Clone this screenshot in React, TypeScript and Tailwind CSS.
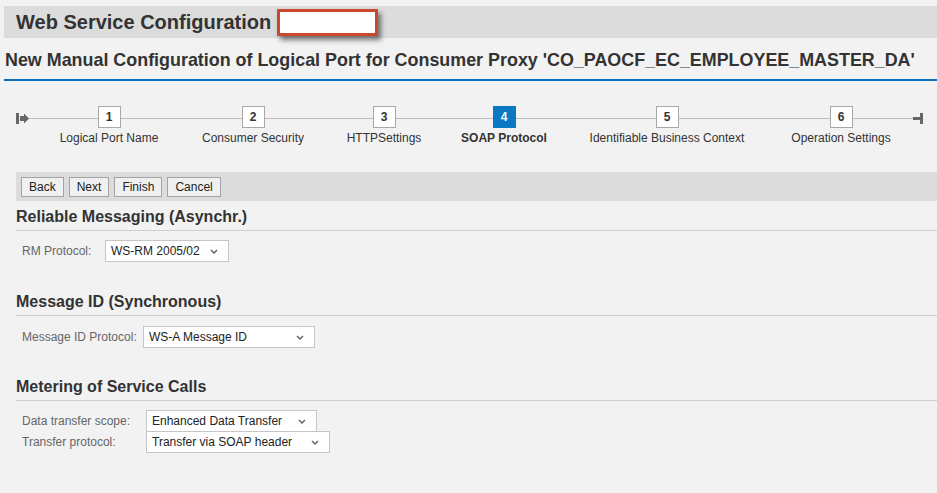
import React from 'react';

type Step = { num: number; label: string; width: string; ml: string; active?: boolean };

const steps: Step[] = [
  { num: 1, label: 'Logical Port Name', width: 'w-[100px]', ml: 'ml-[59px]' },
  { num: 2, label: 'Consumer Security', width: 'w-[102px]', ml: 'ml-[43px]' },
  { num: 3, label: 'HTTPSettings', width: 'w-[74px]', ml: 'ml-[43px]' },
  { num: 4, label: 'SOAP Protocol', width: 'w-[86px]', ml: 'ml-[40px]', active: true },
  { num: 5, label: 'Identifiable Business Context', width: 'w-[156px]', ml: 'ml-[42px]' },
  { num: 6, label: 'Operation Settings', width: 'w-[100px]', ml: 'ml-[46px]' },
];

function Chevron() {
  return (
    <svg width="8" height="5" viewBox="0 0 8 5" className="shrink-0">
      <path d="M1 1 L4 4 L7 1" fill="none" stroke="#666" strokeWidth="1.5" />
    </svg>
  );
}

// dropdown drawn as a div so the box matches the SAP look, not the browser's
function Dropdown({ value, width }: { value: string; width: string }) {
  return (
    <div
      className={`${width} flex h-[22px] items-center justify-between border border-[#c6c6c6] bg-white pl-[5px] pr-[10px] text-[12px] text-[#222]`}
    >
      <span className="whitespace-nowrap">{value}</span>
      <Chevron />
    </div>
  );
}

function Field({ label, labelWidth, value, width }: { label: string; labelWidth: string; value: string; width: string }) {
  return (
    <div className="flex items-center">
      <span className={`${labelWidth} shrink-0 whitespace-nowrap text-[12px] text-[#666]`}>{label}</span>
      <Dropdown value={value} width={width} />
    </div>
  );
}

function SectionTitle({ children, className = '' }: { children: React.ReactNode; className?: string }) {
  return (
    <h2
      className={`border-b border-[#cfcfcf] pb-[4px] text-[16px] font-bold leading-[18px] text-[#333] ${className}`}
    >
      {children}
    </h2>
  );
}

function Roadmap() {
  return (
    <div className="relative mt-[25px]">
      {/* the track behind the step boxes */}
      <div className="absolute left-[16px] right-[14px] top-[7px] flex items-center">
        <svg width="13" height="11" viewBox="0 0 13 11" className="shrink-0">
          <rect x="0" y="0" width="3" height="11" fill="#666" />
          <path d="M4 3 H8 V0.5 L13 5.5 L8 10.5 V8 H4 Z" fill="#666" />
        </svg>
        <div className="h-px flex-1 bg-[#bdbdbd]" />
        <div className="h-[3px] w-[7px] bg-[#666]" />
        <div className="h-[11px] w-[3px] bg-[#666]" />
      </div>
      <div className="relative flex">
        {steps.map((s) => (
          <div key={s.num} className={`${s.width} ${s.ml} flex shrink-0 flex-col items-center`}>
            <div
              className={
                s.active
                  ? 'flex h-[22px] w-[23px] items-center justify-center border border-[#0a78c3] bg-[#0a78c3] text-[12px] font-bold text-white'
                  : 'flex h-[22px] w-[23px] items-center justify-center border border-[#a8a8a8] bg-white text-[12px] font-bold text-[#333]'
              }
            >
              {s.num}
            </div>
            <span
              className={
                s.active
                  ? 'mt-[3px] whitespace-nowrap text-[12px] font-bold leading-[14px] text-[#333]'
                  : 'mt-[3px] whitespace-nowrap text-[12px] leading-[14px] text-[#333]'
              }
            >
              {s.label}
            </span>
          </div>
        ))}
      </div>
    </div>
  );
}

export default function App() {
  return (
    <div className="min-h-[493px] w-full overflow-hidden bg-[#f2f2f2] pt-[6px] font-['Liberation_Sans',Arial,sans-serif]">
      <div className="ml-1 flex h-[32px] items-center bg-[#dcdcdc] pl-3">
        <h1 className="text-[20px] font-bold leading-[24px] text-[#333]">Web Service Configuration</h1>
        <div className="ml-[6px] h-[27px] w-[101px] border-[3px] border-[#c9482e] bg-white shadow-[3px_4px_5px_rgba(0,0,0,0.5)]" />
      </div>

      <div className="ml-1 mt-[11px] border-b-2 border-[#0a6ebd] pb-[8px] pl-[1px]">
        <p className="whitespace-nowrap text-[17.9px] font-bold leading-[22px] text-[#333]">
          New Manual Configuration of Logical Port for Consumer Proxy 'CO_PAOCF_EC_EMPLOYEE_MASTER_DA'
        </p>
      </div>

      <Roadmap />

      <div className="ml-4 mt-[27px] flex h-[29px] gap-[5px] bg-[#dcdcdc] pl-[5px] pt-[5px]">
        {['Back', 'Next', 'Finish', 'Cancel'].map((b) => (
          <button
            key={b}
            type="button"
            className="h-[20px] border border-[#a3a3a3] bg-[#f0f0f0] px-[7px] text-[12px] leading-[18px] text-[#222]"
          >
            {b}
          </button>
        ))}
      </div>

      <div className="pl-4">
        <SectionTitle className="mt-[7px]">Reliable Messaging (Asynchr.)</SectionTitle>
        <div className="mt-[9px] pl-[6px]">
          <Field label="RM Protocol:" labelWidth="w-[83px]" value="WS-RM 2005/02" width="w-[124px]" />
        </div>

        <SectionTitle className="mt-[31px]">Message ID (Synchronous)</SectionTitle>
        <div className="mt-[10px] pl-[6px]">
          <Field label="Message ID Protocol:" labelWidth="w-[121px]" value="WS-A Message ID" width="w-[172px]" />
        </div>

        <SectionTitle className="mt-[30px]">Metering of Service Calls</SectionTitle>
        <div className="mt-[9px] flex flex-col pl-[6px]">
          <Field label="Data transfer scope:" labelWidth="w-[124px]" value="Enhanced Data Transfer" width="w-[171px]" />
          <div className="-mt-px">
            <Field label="Transfer protocol:" labelWidth="w-[124px]" value="Transfer via SOAP header" width="w-[184px]" />
          </div>
        </div>
      </div>
    </div>
  );
}
